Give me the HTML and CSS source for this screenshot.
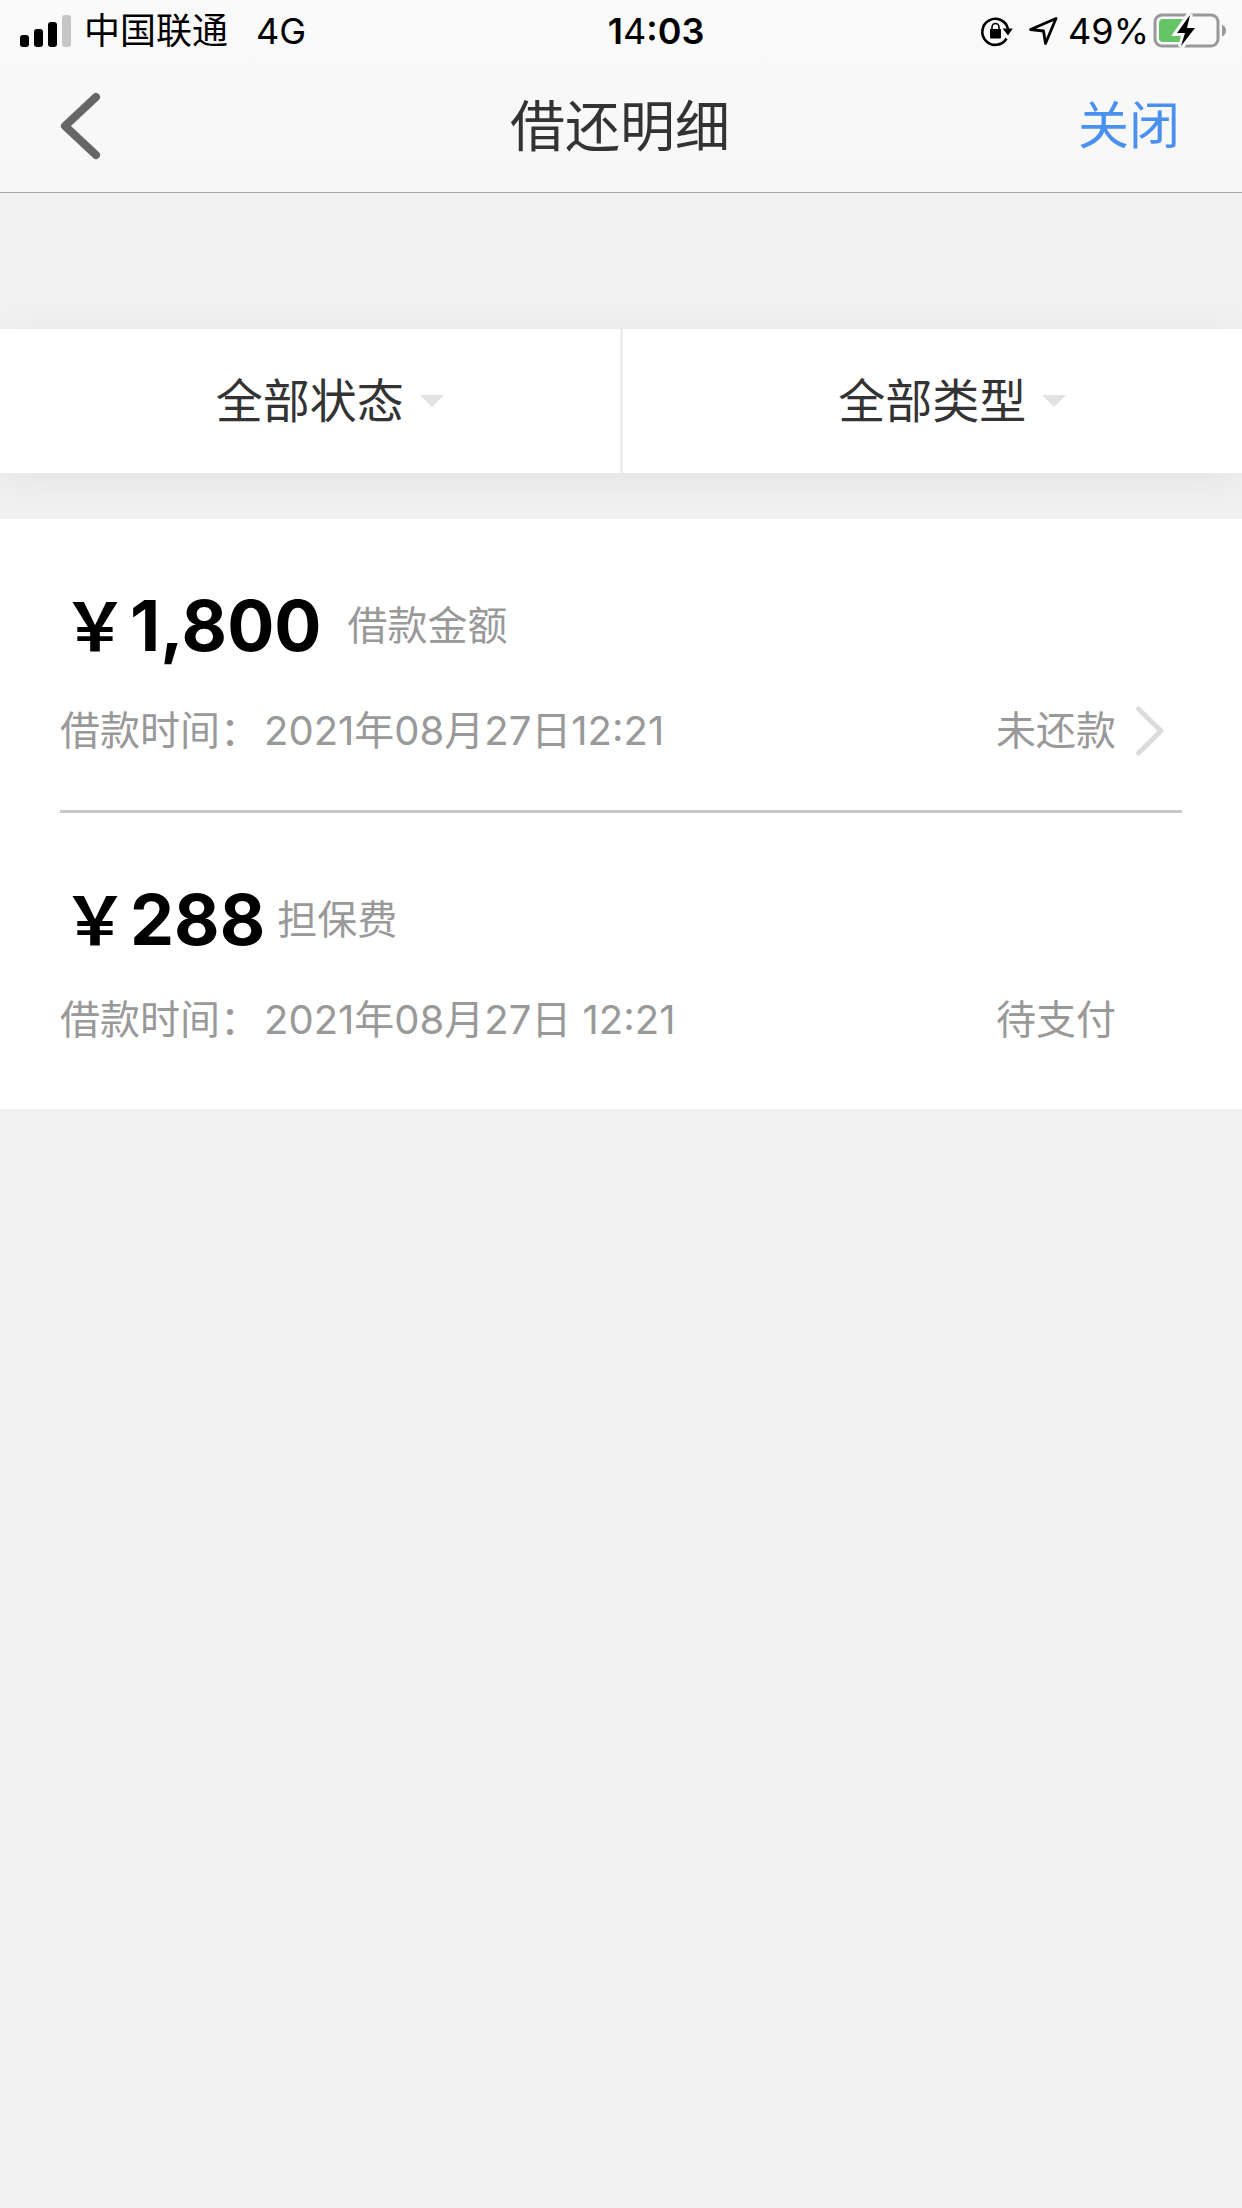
FILE: index.html
```html
<!DOCTYPE html>
<html lang="zh-CN">
<head>
  <meta charset="utf-8">
  <meta name="viewport" content="width=device-width, initial-scale=1">
  <title>借还明细</title>
  <link rel="stylesheet" href="styles.css">
</head>
<body>
  <header class="header">
    <div class="status-bar">
      <div class="status-left">
        <svg class="signal" width="52" height="34" viewBox="0 0 52 34" aria-hidden="true">
          <rect x="0" y="21" width="9" height="12" rx="3"/>
          <rect x="14" y="15" width="9" height="18" rx="3"/>
          <rect x="28" y="8" width="9" height="25" rx="3"/>
          <rect x="42" y="1" width="9" height="32" rx="3" fill="#c6c6c6"/>
        </svg>
        <span class="carrier">中国联通</span>
        <span>4G</span>
      </div>
      <time class="clock">1<span class="clock-thin">4</span>:03</time>
      <div class="status-right">
        <svg class="lock" width="34" height="32" viewBox="0 0 34 32" aria-hidden="true">
          <path d="M26.500 23.500A13 13 0 1 1 28 14" fill="none" stroke="#000" stroke-width="2.600"/>
          <path d="M22.600 13.600h10.200L28 20.600z"/>
          <path d="M10 14h11v8.500a1 1 0 0 1-1 1h-9a1 1 0 0 1-1-1z"/>
          <path d="M12 14.500v-2.500a3.500 3.500 0 0 1 7 0v2.500" fill="none" stroke="#000" stroke-width="1.600"/>
        </svg>
        <svg class="location" width="30" height="30" viewBox="0 0 30 30" aria-hidden="true">
          <path d="M2.500 13.500 28 2.500 17.500 27.500 15.500 15z" fill="none" stroke="#000" stroke-width="2.800" stroke-linejoin="round"/>
        </svg>
        <span>49%</span>
        <svg class="battery" width="74" height="36" viewBox="0 0 74 36" aria-hidden="true">
          <rect x="2" y="2" width="63" height="31" rx="7" fill="none" stroke="#999" stroke-width="3"/>
          <path d="M69 11.500q4 2 4 6t-4 6z" fill="#999"/>
          <path d="M10 6h21v23H10a4 4 0 0 1-4-4V10a4 4 0 0 1 4-4z" fill="#65c466"/>
          <path d="M37 1 24 20h8l-4 14L42 15h-8z" fill="#000" stroke="#f9f9f9" stroke-width="6"/>
          <path d="M37 2 24 20h8l-4 13L42 15h-8z"/>
        </svg>
      </div>
    </div>
    <nav class="nav">
      <button class="back" type="button" aria-label="返回">
        <svg width="42" height="68" viewBox="0 0 42 68" aria-hidden="true">
          <path d="M36 5 5 34 36 63" fill="none" stroke="#666" stroke-width="8" stroke-linecap="round" stroke-linejoin="round"/>
        </svg>
      </button>
      <h1 class="title">借还明细</h1>
      <button class="close" type="button">关闭</button>
    </nav>
  </header>

  <main>
    <form class="filters">
      <div class="filter">
        <select class="filter-select" aria-label="状态">
          <option>全部状态</option>
        </select>
        <svg class="caret" width="24" height="12" viewBox="0 0 24 12" aria-hidden="true"><path d="M0 0h24L12 12z"/></svg>
      </div>
      <div class="filter">
        <select class="filter-select" aria-label="类型">
          <option>全部类型</option>
        </select>
        <svg class="caret" width="24" height="12" viewBox="0 0 24 12" aria-hidden="true"><path d="M0 0h24L12 12z"/></svg>
      </div>
    </form>

    <ul class="records">
      <li class="record">
        <div class="record-head">
          <strong class="amount"><span class="yen">￥</span>1,800</strong>
          <span class="kind">借款金额</span>
        </div>
        <div class="record-meta">
          <span>借款时间：<span class="date">2021年08月27日12:21</span></span>
          <span>未还款</span>
          <svg class="chevron" width="66" height="66" viewBox="0 0 66 66" aria-hidden="true">
            <path d="M22.500 11 45 33 22.500 55" fill="none" stroke="#dcdcdc" stroke-width="5" stroke-linecap="round" stroke-linejoin="round"/>
          </svg>
        </div>
      </li>
      <li class="record">
        <div class="record-head record-head-tight">
          <strong class="amount"><span class="yen">￥</span>288</strong>
          <span class="kind">担保费</span>
        </div>
        <div class="record-meta">
          <span>借款时间：<span class="date">2021年08月27日 12:21</span></span>
          <span>待支付</span>
        </div>
      </li>
    </ul>
  </main>
</body>
</html>
```
FILE: styles.css
```css
* {
  box-sizing: border-box;
}

body {
  margin: 0;
  min-height: 100vh;
  background: #f1f1f1;
  color: #333;
  font-family: Inter, "Noto Sans CJK SC", sans-serif;
}

button,
select {
  margin: 0;
  padding: 0;
  border: 0;
  background: none;
  color: inherit;
  font: inherit;
}

svg {
  display: block;
  flex: none;
}

/* Header: system status row and navigation row */
.header {
  border-bottom: 1px solid #a8a8a8;
  background: linear-gradient(#fafafa, #f7f7f7);
}

.status-bar {
  display: grid;
  grid-template-columns: 9fr auto 8fr;
  align-items: center;
  height: 62px;
  padding: 0 15px 0 20px;
  color: #000;
  font-size: 36px;
  line-height: 48px;
}

.status-left,
.status-right {
  display: flex;
  align-items: center;
}

.status-right {
  justify-content: flex-end;
}

.signal {
  margin-right: 12px;
}

.carrier {
  margin-right: 28px;
}

.clock {
  font-weight: 600;
}

.clock-thin {
  font-weight: 400;
}

.lock {
  margin-right: 14px;
}

.location {
  margin-right: 10px;
}

.battery {
  margin-left: 4px;
}

.nav {
  display: grid;
  grid-template-columns: 1fr auto 1fr;
  align-items: center;
  height: 130px;
  padding: 0 62px 2px 60px;
}

.back {
  justify-self: start;
}

.title {
  margin: 0;
  font-size: 55px;
  font-weight: 400;
  line-height: 72px;
}

.close {
  justify-self: end;
  color: #4a90f0;
  font-size: 51px;
  line-height: 72px;
}

/* Filter bar: the gap shows through as the divider */
.filters {
  display: grid;
  grid-template-columns: 1fr 1fr;
  gap: 3px;
  margin: 136px 0 46px;
  background: #eee;
  box-shadow: 0 8px 40px rgba(0, 0, 0, 0.06);
}

.filter {
  display: grid;
  grid-template-columns: 1fr auto 1fr;
  align-items: center;
  height: 144px;
  background: #fff;
}

.filter-select {
  grid-column: 2;
  appearance: none;
  font-size: 47px;
  line-height: 72px;
}

.caret {
  margin-left: 16px;
  fill: #e1e2e3;
}

/* Loan records */
.records {
  position: relative;
  margin: 0;
  padding: 0 60px;
  background: #fff;
  list-style: none;
}

.record {
  padding: 59px 0 46px;
  border-bottom: 3px solid #c8c8c8;
}

.record:last-child {
  padding-bottom: 61px;
  border-bottom: 0;
}

.record-head {
  display: flex;
  align-items: center;
  gap: 26px;
  margin-bottom: 24px;
}

.record-head-tight {
  gap: 12px;
}

.amount {
  color: #000;
  font-size: 70px;
  font-weight: 700;
  line-height: 96px;
}

.yen {
  display: inline-block;
  width: 70px;
  font-size: 66px;
  line-height: 72px;
  text-align: center;
}

.kind,
.record-meta {
  color: #999;
  font-size: 40px;
  line-height: 56px;
}

.record-meta {
  display: grid;
  grid-template-columns: 1fr auto 66px;
  align-items: center;
}

.date {
  margin-left: 4px;
}
```
